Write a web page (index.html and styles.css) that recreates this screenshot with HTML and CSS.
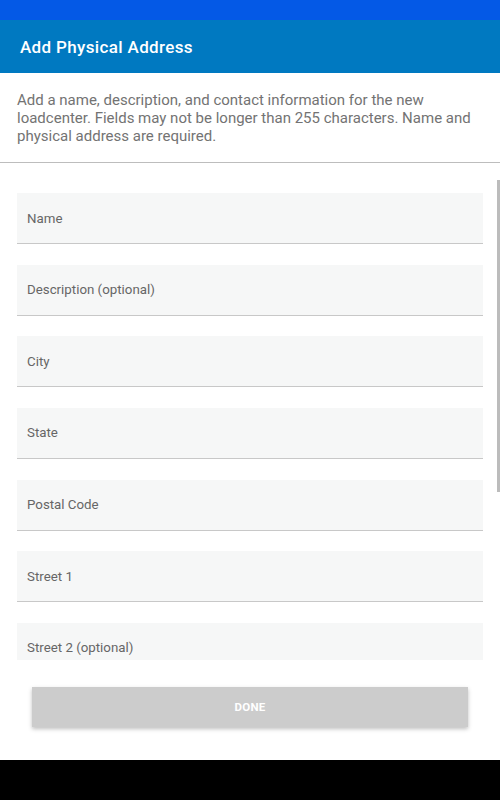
FILE: index.html
```html
<!DOCTYPE html>
<html>
<head>
<meta charset="utf-8">
<link rel="stylesheet" href="styles.css">
</head>
<body>
<div class="screen">
  <div class="status"></div>
  <div class="appbar"><span class="title">Add Physical Address</span></div>
  <div class="intro">Add a name, description, and contact information for the new loadcenter. Fields may not be longer than 255 characters. Name and physical address are required.</div>
  <div class="scroll">
    <div class="fields">
      <div class="field"><span>Name</span></div>
      <div class="field"><span>Description (optional)</span></div>
      <div class="field"><span>City</span></div>
      <div class="field"><span>State</span></div>
      <div class="field"><span>Postal Code</span></div>
      <div class="field"><span>Street 1</span></div>
      <div class="field"><span>Street 2 (optional)</span></div>
    </div>
    <div class="scrollbar"></div>
  </div>
  <div class="actions"><div class="done">DONE</div></div>
  <div class="navbar"></div>
</div>
</body>
</html>
```
FILE: styles.css
```css
html, body { margin: 0; padding: 0; }
body { font-family: Roboto, "Noto Sans", sans-serif; background: #fff; }
.screen { width: 500px; height: 800px; display: flex; flex-direction: column; overflow: hidden; }
.status { height: 20px; background: #0459e6; flex: none; }
.appbar { height: 53px; background: #0079c1; display: flex; align-items: center; padding-left: 20px; padding-top: 1px; box-sizing: border-box; flex: none; }
.title { color: #fff; font-size: 17px; font-weight: 500; letter-spacing: 0.35px; }
.intro { padding: 18px 17px 0; height: 90px; box-sizing: border-box; font-size: 15px; line-height: 18px; color: #737373; border-bottom: 1px solid #bdbdbd; flex: none; }
.scroll { position: relative; height: 497px; overflow: hidden; flex: none; }
.fields { padding: 30px 17px 0; display: flex; flex-direction: column; gap: 20.67px; }
.field { height: 50px; background: #f6f7f7; border-bottom: 1px solid #c8c8c8; display: flex; align-items: center; padding-left: 10px; font-size: 13.3px; color: #666; flex: none; }
.scrollbar { position: absolute; right: 0; top: 17px; width: 3px; height: 312px; background: #bcbcbc; }
.actions { height: 100px; flex: none; padding: 27px 32px 0; box-sizing: border-box; }
.done { height: 40px; background: #cccccc; color: #fff; font-size: 11.5px; font-weight: 700; display: flex; align-items: center; justify-content: center; box-shadow: 0 2px 4px rgba(0,0,0,0.25); letter-spacing: 0.3px; }
.navbar { height: 40px; background: #000; flex: none; }
```
